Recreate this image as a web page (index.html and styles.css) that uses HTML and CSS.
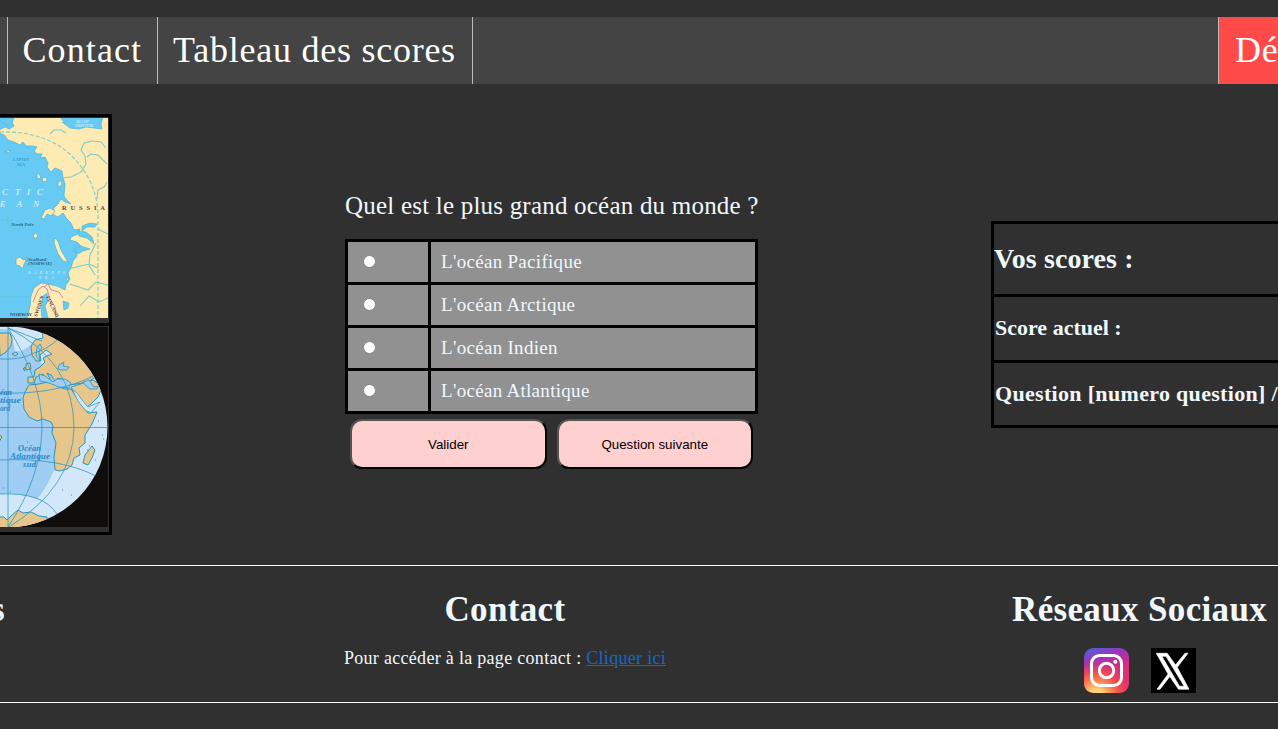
FILE: index.html
```html
<!DOCTYPE html>
<html lang="fr">
<head>
<meta charset="utf-8">
<title>Quiz</title>
<link rel="stylesheet" href="styles.css">
</head>
<body>
<nav class="nav">
  <span class="nav-edge"></span>
  <a class="nav-link">Contact</a>
  <a class="nav-link">Tableau des scores</a>
  <a class="nav-logout">Dé</a>
</nav>
<main class="main">
  <div class="maps">
    <div class="map-cell">
      <svg class="map" viewBox="0 0 108 200" width="108" height="200">
        <rect width="108" height="200" fill="#66caf5"/>
        <g fill="#feeab3" stroke="#42b6d6" stroke-width=".7" stroke-linejoin="round">
          <path d="M14-1L12 4 14 8 9 11 5 9-1 12V15L4 17 8 22 14 24 20 27 23 24 26 28 33 28 37 29 34 33 37 36 42 36 40 40 45 39 48 45 47 49 51 54 55 50 62 53 63 60 65 66 64 78 66 81 71 86 65 84 61 81 58 86 54 90 52 96 58 99 63 95 67 101 71 105 74 112 80 111 78 116 71 119 70 122 77 124 82 129 80 134 76 132 77 138 73 143 71 150 68 155 70 161 66 167 65 172 57 168 48 166 41 165 34 170 31 178 30 188 27 201H109V-1Z"/>
          <path d="M55 120l3 3 3 9 4 7 3 5-5-1-5-7-4-11zM37 55l3 2 1 4-4-1zM42 60l4-1 1 4-4 1zM41 100l4-8 5-2 5 3-4 5-4-2-3 5zM16 141l4-2 3 3 4-1-3 5-1 5-3-3-4-1zM26 139l2 2-2 2zM5 34l5-2-1 3zM33 117l3-2 2 3-3 3zM58 65l3-3 1 5-4 2zM66 159l3 2-2 2z"/>
        </g>
        <path d="M60-1L65 5 62 4 70 10 79 11 86 9 94 10 102 11 101 6 103-1ZM0 0H14L12 4 8 8 0 3ZM43 178l4-3 1 8-3 5 3 12h-6l-1-10zM63 183l6 2-1 5-4 2zM78 113l8 1 6 5 2 7-7-6-8-2zM82 108l8-3 7 1-2 3-8 0-5 4zM74 131l7-3 9 3-7 2-5 3z" fill="#66caf5" stroke="#48bbd5" stroke-width=".7"/>
        <g fill="none" stroke="#7acfcb" stroke-width="1.1">
          <path d="M62 60l9-1 10-5 5-8-1-8-4-6 3-7 8-2 9 1 5 6M87 39l4-3 7 1 9 9M50 16l4-4 7 0 5 3M107 64l-3 5-6 3-1 9M96 125l-6 12-1 10 6 10M70 166l18 6 8-8 12 3M80 188l9-10 10 6 9-4M98 111l10 5M68 151l21-5 9 4"/>
          <path d="M0 14q28-1 50 9t36 33q11 18 12 39v106" stroke-dasharray="4 2"/>
        </g>
        <path d="M33 184l5-12 5-4 4 3 3 10 5 8 1 11M44 169l4-3 3 6 8 2 4 6" fill="none" stroke="#c88bb4" stroke-width="1"/>
        <path d="M0 179h28M8 96v12M2 102h11" stroke="#56c9d0" stroke-width=".8"/>
        <g class="atlas-text">
          <text x="2" y="77" class="sea-big" textLength="41">CTIC</text>
          <text x="0" y="89" class="sea-big" textLength="39">EAN</text>
          <text x="62" y="92" class="country" textLength="43">RUSSIA</text>
          <text x="11" y="108" class="place">North Pole</text>
          <text x="28" y="143" class="place">Svalbard</text>
          <text x="28" y="147" class="place">(NORWAY)</text>
          <text x="28" y="156" class="sea" textLength="37">BARENTS</text>
          <text x="39" y="161" class="sea" textLength="15">SEA</text>
          <text x="76" y="5" class="sea">SEA OF</text>
          <text x="75" y="9" class="sea">OKHOTSK</text>
          <text x="13" y="43" class="sea-blue">LAPTEV</text>
          <text x="17" y="48" class="sea-blue">SEA</text>
          <text x="10" y="198" class="country-small">NORWAY</text>
          <text class="country-small" transform="translate(37 199) rotate(-72)">SWEDEN</text>
          <text class="country-small" transform="translate(46 179) rotate(64)">FINLAND</text>
        </g>
      </svg>
    </div>
    <div class="map-cell">
      <svg class="map globe" viewBox="0 0 108 200" width="108" height="200">
        <defs><clipPath id="disc"><circle cx="7" cy="100" r="100.5"/></clipPath></defs>
        <rect width="108" height="200" fill="#0f0e0c"/>
        <g clip-path="url(#disc)">
          <rect width="108" height="200" fill="#d2e7f8"/>
          <path d="M0 2H7L15 12 22 14 20 25 31 18 40 35 75 65 54 143Q46 162 37 172 17 165 0 167Z" fill="#9fcdf3"/>
          <path d="M12 9l3 15 6 0 6-8 5-11-8-4z" fill="#d2e7f8"/>
          <g fill="#e7c68c" stroke="#2995bf" stroke-width="1" stroke-linejoin="round">
            <path d="M-1 6H10L12 12 11 19 6 25 0 29ZM29 58L25 65 23 71 24 82 29 90 37 94 43 92 51 95 53 99 52 106 56 116 54 130 55 143 60 144 67 142 72 138 74 131 80 128 79 121 85 116 85 108 92 97 97 85 88 86 83 80 77 71 71 62 64 62 56 58 48 55 39 57Z"/>
            <path d="M28 50H34L35 43 40 40 45 35 43 31 47 29 52 27 46 23 40 28 41 34 36 34 32 28 31 19 35 13 43 11 42 4H110V50L94 51 88 55 70 58 68 54 58 51 55 54 51 48 47 46 51 54 48 56 43 47 36 50 34 56 28 56Z"/>
            <path d="M71 60L93 53 99 57 101 63 98 70 91 77 87 80 83 76 75 68ZM92 119l3 4-3 8-4 7-5-2 2-8zM26 37l4-1 1 6-5 1zM23 42l2-2 0 4zM-1 107l3 3-3 5zM-1 190l5 0 3 3 5-5 6-5 5 3 8-1 8 4 8 1V201H-1ZM12 27l4-2 2 2-3 2z"/>
          </g>
          <g fill="#9fcdf3" stroke="#2995bf" stroke-width=".8">
            <path d="M39 47l6 2 8 6 4-3 8 0 6 4-2 5-10-1-10-4-9-2zM58 42l1-4 5-3-1 4 6 1-2 3-6 0zM83 55l6-2 5 7 4-1-1 3-7 0-5-4zM37 21l3-4 2 4-3 4 1 9-4-5z"/>
          </g>
          <g fill="none" stroke="#2995bf" stroke-width=".75">
            <path d="M8 0V200M0 100.500H108M8 1Q42 53 42 101 41 151 8 200M8 1Q74 34 74 101 73 160 9 200M0 32Q23 33 34 26 48 22 58 12M0 66Q57 68 95 48M0 133Q60 130 98 150M0 167Q43 165 57 187M8 1L42 14"/>
          </g>
          <path d="M72 62l5 4 5 7 6 7 12-5-9 11-6-3-7-9z" fill="#d2e7f8" stroke="#2995bf" stroke-width=".7"/>
          <path d="M89 119h1M87 123h1M95 133h1M102 108h1M103 112h1M98 94h1M62 163h1M71 168h1M3 161h1M10 165h1M27 115h1" stroke="#2995bf"/>
        </g>
        <g class="ocean-text">
          <text x="0" y="68" textLength="12">éan</text>
          <text x="0" y="76" textLength="21" lengthAdjust="spacingAndGlyphs">tique</text>
          <text x="0" y="84" textLength="10" lengthAdjust="spacingAndGlyphs">ord</text>
          <text x="18" y="124" textLength="23">Océan</text>
          <text x="10" y="132" textLength="40" lengthAdjust="spacingAndGlyphs">Atlantique</text>
          <text x="23" y="140" textLength="13">sud</text>
        </g>
      </svg>
    </div>
  </div>
  <section class="quiz">
    <p class="question">Quel est le plus grand océan du monde ?</p>
    <table class="answers">
      <tr><td class="pick"><input type="radio" name="rep" class="radio"></td><td class="answer">L'océan Pacifique</td></tr>
      <tr><td class="pick"><input type="radio" name="rep" class="radio"></td><td class="answer">L'océan Arctique</td></tr>
      <tr><td class="pick"><input type="radio" name="rep" class="radio"></td><td class="answer">L'océan Indien</td></tr>
      <tr><td class="pick"><input type="radio" name="rep" class="radio"></td><td class="answer">L'océan Atlantique</td></tr>
    </table>
    <div class="actions">
      <button class="btn">Valider</button>
      <button class="btn">Question suivante</button>
    </div>
  </section>
  <section class="scores">
    <div class="score-title">Vos scores :</div>
    <div class="score-row">Score actuel :</div>
    <div class="score-row score-question">Question [numero question] /</div>
  </section>
</main>
<footer class="footer">
  <div class="foot-left"><h2 class="foot-title">s</h2></div>
  <div class="foot-contact">
    <h2 class="foot-title">Contact</h2>
    <p class="foot-text">Pour accéder à la page contact : <a class="foot-link">Cliquer ici</a></p>
  </div>
  <div class="foot-social">
    <h2 class="foot-title">Réseaux Sociaux</h2>
    <div class="icons">
      <svg width="45" height="45" viewBox="0 0 45 45">
        <defs>
          <linearGradient id="ig-base" x1="0" y1="0" x2=".35" y2="1">
            <stop offset="0" stop-color="#4168dc"/><stop offset=".3" stop-color="#9a36bb"/><stop offset=".65" stop-color="#dd2b7c"/><stop offset="1" stop-color="#e3336b"/>
          </linearGradient>
          <radialGradient id="ig-warm" cx=".27" cy="1.08" r="1">
            <stop offset="0" stop-color="#ffdc80"/><stop offset=".15" stop-color="#fed373"/><stop offset=".5" stop-color="#f7593f" stop-opacity=".95"/><stop offset=".85" stop-color="#dd2b7c" stop-opacity="0"/>
          </radialGradient>
        </defs>
        <rect width="45" height="45" rx="9.500" fill="url(#ig-base)"/>
        <rect width="45" height="45" rx="9.500" fill="url(#ig-warm)"/>
        <rect x="7.500" y="7.500" width="30" height="30" rx="8" fill="none" stroke="#fff" stroke-width="3"/>
        <circle cx="22.500" cy="22.500" r="7.200" fill="none" stroke="#fff" stroke-width="3"/>
        <circle cx="31.300" cy="13.700" r="2" fill="#fff"/>
      </svg>
      <svg width="45" height="45" viewBox="0 0 45 45">
        <rect width="45" height="45" fill="#000"/>
        <path d="M5.300 5.300H16.200L24.500 17 34 5.300H37L26.200 19.300 38 41.200H27.500L18.800 28.500 9 41.200H6L17.100 26.100ZM10.800 8.300L28.500 38.200H33.200L15 8.300Z" fill="#fff" fill-rule="evenodd" stroke="#fff" stroke-width=".7"/>
      </svg>
    </div>
  </div>
</footer>
</body>
</html>
```

FILE: styles.css
```css
* { box-sizing: border-box; }
html, body { height: 100%; }
body {
  margin: 0;
  padding-top: 17px;
  overflow: hidden;
  background: #303030;
  color: #f0f8ff;
  font-family: "Liberation Serif", serif;
  white-space: nowrap;
}
.nav {
  display: flex;
  height: 67px;
  background: #444;
  color: #fff;
  font-size: 36px;
  line-height: 66px;
  letter-spacing: .75px;
}
.nav-edge { width: 8px; border-right: 1px solid #bbb; }
.nav-link { padding: 0 14.500px; border-right: 1px solid #bbb; }
.nav-logout {
  width: 60px;
  margin-left: auto;
  padding-left: 16px;
  border-left: 1px solid #bbb;
  background: #ff4a4a;
  overflow: hidden;
}
.nav-link:nth-of-type(1) { width: 150px; letter-spacing: 1.1px; }
.nav-link:nth-of-type(2) { width: 315px; padding-left: 15px; }

.main {
  display: grid;
  grid-template-columns: 345px 413px 1fr;
  height: 481px;
}
.maps { width: 112px; margin-top: 30px; }
.map-cell {
  height: 212px;
  padding: 1px 1px 0 0;
  border: solid #000;
  border-width: 3px 3px 3px 0;
}
.map-cell + .map-cell { margin-top: -3px; }
.map { display: block; }
.sea-big { font-size: 9px; font-style: italic; fill: #e6f7ff; }
.country { font-size: 6.500px; font-weight: bold; fill: #554d42; }
.country-small { font-size: 5px; font-weight: bold; fill: #514b46; }
.place { font-size: 5px; font-weight: bold; font-style: italic; fill: #28647c; }
.sea { font-size: 4px; font-style: italic; fill: #e2f6ff; }
.sea-blue { font-size: 4px; font-weight: bold; fill: #269dcc; }
.ocean-text { font-size: 8.500px; font-weight: bold; font-style: italic; fill: #1f8bc5; }

.quiz { padding-top: 106px; }
.question { margin: 0; height: 49px; font-size: 25px; line-height: 32px; letter-spacing: .21px; }
.answers { width: 413px; border-collapse: collapse; table-layout: fixed; background: #919191; }
.answers td { height: 43px; border: 3px solid #000; padding: 0; vertical-align: middle; }
.answers .pick { width: 83px; padding: 0 0 2px 15px; }
.answers .answer { padding-left: 10px; font-size: 19px; letter-spacing: .3px; }
.radio {
  display: block;
  width: 13px;
  height: 13px;
  margin: 0;
  appearance: none;
  border: 1px solid #858585;
  border-radius: 50%;
  background: #fff;
}
.actions { display: flex; gap: 10px; padding: 5px; }
.btn {
  flex: 1;
  height: 50px;
  border: 2px outset #000;
  border-radius: 12px;
  background: #ffd0d0;
  color: #000;
  font: 13.333px "Liberation Sans", sans-serif;
}

.scores {
  display: grid;
  grid-template-rows: 70px 66px 65px;
  align-self: start;
  height: 207px;
  margin: 137px 0 0 233px;
  border: solid #000;
  border-width: 3px 0 3px 3px;
  font-weight: bold;
  overflow: hidden;
}
.score-title { font-size: 28px; line-height: 70px; letter-spacing: .1px; }
.score-row { padding-left: 1px; border-top: 3px solid #000; font-size: 22px; line-height: 61px; }
.score-question { letter-spacing: .32px; }

.footer {
  display: grid;
  grid-template-columns: 5px 1000px 273px;
  height: 138px;
  border: solid #fff;
  border-width: 1px 0;
}
.foot-left { direction: rtl; }
.foot-title { margin: 0; padding-top: 24px; font-size: 35px; line-height: 40px; letter-spacing: .35px; }
.foot-contact { text-align: center; }
.foot-text { margin: 18px 0 0; font-size: 18px; line-height: 20px; letter-spacing: .3px; }
.foot-link { color: #1569c7; text-decoration: underline; }
.foot-social { padding-left: 7px; }
.icons { display: flex; gap: 22px; padding: 18px 0 0 72px; }
```
